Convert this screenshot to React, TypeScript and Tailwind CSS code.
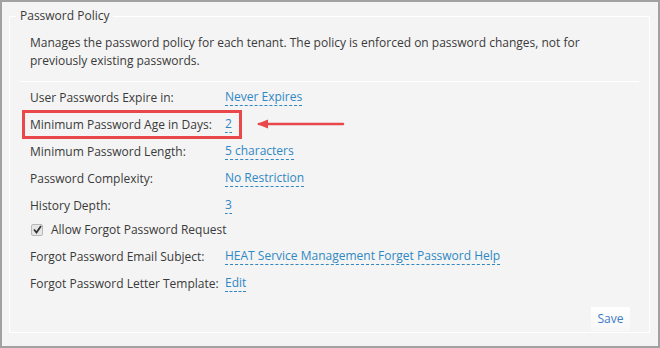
const rows = [
  { label: "User Passwords Expire in:", value: "Never Expires" },
  { label: "Minimum Password Age in Days:", value: "2" },
  { label: "Minimum Password Length:", value: "5 characters" },
  { label: "Password Complexity:", value: "No Restriction" },
  { label: "History Depth:", value: "3" },
];

const forgotRows = [
  { label: "Forgot Password Email Subject:", value: "HEAT Service Management Forget Password Help" },
  { label: "Forgot Password Letter Template:", value: "Edit" },
];

function Row({ label, value }: { label: string; value: string }) {
  return (
    <div className="flex items-center h-[27px] pl-[10px]">
      <div className="w-[195px] shrink-0">{label}</div>
      <span className="inline-block leading-[16px] text-[#2f88c4] border-b border-dashed border-[#2f88c4]">
        {value}
      </span>
    </div>
  );
}

export default function App() {
  return (
    <div
      className="relative w-[660px] h-[348px] bg-[#f4f4f4] border-2 border-[#a2a2a2] text-[12px] text-[#3a3a3a] overflow-hidden"
      style={{ fontFamily: '"Open Sans", "Liberation Sans", sans-serif' }}
    >
      <fieldset className="ml-[7px] mt-[5px] w-[641px] h-[326px] border border-white flex flex-col">
        <legend className="ml-[6px] px-[4px] leading-[18px]">Password Policy</legend>

        <div className="px-[10px] pt-[9px]">
          <p className="px-[10px] leading-[18px]">
            Manages the password policy for each tenant. The policy is enforced on password changes, not for
            previously existing passwords.
          </p>
          <div className="mt-[11px] h-px bg-white" />
        </div>

        <div className="pt-[2px] px-[10px]">
          {rows.map((r) => (
            <Row key={r.label} label={r.label} value={r.value} />
          ))}
          <div className="flex items-center h-[21px] pl-[11px] gap-[8px]">
            <span className="w-[12px] h-[12px] rounded-[2px] border border-[#b8b8b8] bg-[#e6e6e6] flex items-center justify-center">
              <svg width="9" height="9" viewBox="0 0 9 9">
                <path d="M1 4.5 L3.5 7.5 L8 1" stroke="#333" strokeWidth="1.8" fill="none" />
              </svg>
            </span>
            <span>Allow Forgot Password Request</span>
          </div>
          <div className="h-[3px]" />
          {forgotRows.map((r) => (
            <Row key={r.label} label={r.label} value={r.value} />
          ))}
        </div>

        <div className="mt-auto flex justify-end pr-[19px] pb-[1px]">
          <button className="w-[39px] h-[24px] bg-gradient-to-b from-white to-[#f7f7f7] text-[#3b7cc6] text-[12px]">
            Save
          </button>
        </div>
      </fieldset>

      {/* annotation overlay */}
      <div className="absolute left-[20px] top-[108px] w-[220px] h-[29px] border-[3px] border-[#e8474c]" />
      <svg className="absolute left-[255px] top-[117px]" width="90" height="10" viewBox="0 0 90 10">
        <path d="M2 5 L86 5" stroke="#e8474c" strokeWidth="2.5" strokeLinecap="round" />
        <path d="M0 5 L11 0.5 L11 9.5 Z" fill="#e8474c" />
      </svg>
    </div>
  );
}
